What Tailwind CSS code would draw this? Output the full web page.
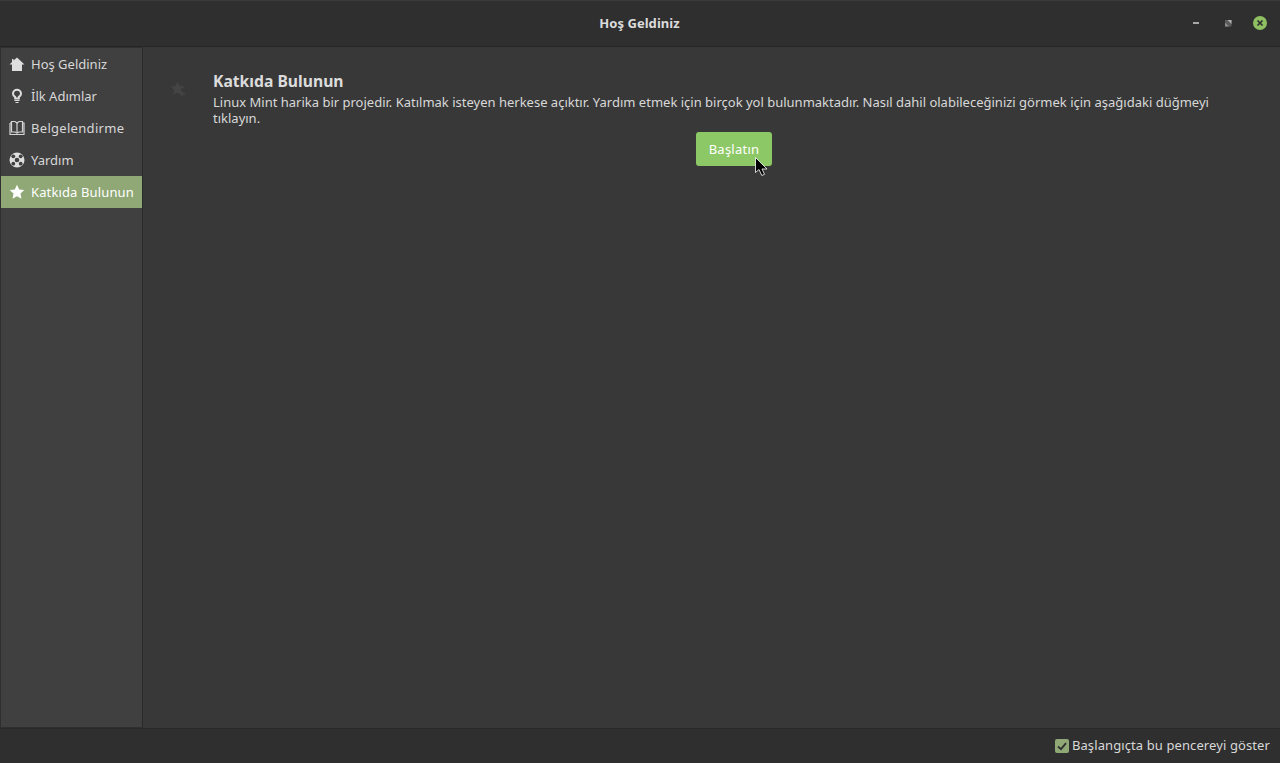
<!DOCTYPE html>
<html lang="tr">
<head>
    <meta charset="utf-8"/>
    <title>Hoş Geldiniz</title>
    <script src="https://cdn.jsdelivr.net/npm/@tailwindcss/browser@4"></script>
</head>
<body class="w-[1280px] h-[763px] overflow-hidden bg-[#383838] text-[13px] text-[#d8d8d8] font-['Noto_Sans',sans-serif]">
<div class="flex flex-col h-[763px]">
    <!-- title bar -->
    <header class="relative flex items-center justify-center h-[46px] shrink-0 bg-[#2f2f2f] border-t border-[#3a3a3a]">
        <h1 class="text-[13px] font-bold text-[#dcdcdc] tracking-[0.05px] pr-[1px]">Hoş Geldiniz</h1>
        <div class="absolute right-[13px] top-[15px] flex items-center gap-[18px]">
            <div class="w-[14px] h-[14px] flex items-center justify-center">
                <div class="w-[6px] h-[2px] bg-[#a8a8a8]"></div>
            </div>
            <svg class="w-[14px] h-[14px]" viewBox="0 0 14 14">
                <rect x="4" y="4" width="6.500" height="6.500" fill="#5c5c5c"/>
                <path d="M6.500 4h4v4z" fill="#b4b4b4"/>
                <path d="M4 6.500l4 4H4z" fill="#8c8c8c"/>
            </svg>
            <svg class="w-[14px] h-[14px]" viewBox="0 0 14 14">
                <circle cx="7" cy="7" r="7" fill="#8fbf63"/>
                <path d="M4.500 4.500l5 5M9.500 4.500l-5 5" stroke="#2f2f2f" stroke-width="1.700"/>
            </svg>
        </div>
    </header>
    <div class="flex flex-1 min-h-0 border-t border-[#262626]">
        <!-- sidebar -->
        <nav class="w-[143px] shrink-0 flex flex-col pl-px pt-px pb-px bg-[#2f2f2f]">
            <div class="flex-1 flex flex-col bg-[#404040] border-r border-[#2a2a2a]">
                <a class="flex items-center h-8 pl-2 gap-[6px]">
                    <svg class="w-4 h-4" viewBox="0 0 16 16" fill="#dedede"><path d="M8 1.500 4.500 4.500V3H3v3L.5 8.500H3V15h10V8.500h2.500z"/></svg>
                    <span class="pt-[2px]">Hoş Geldiniz</span>
                </a>
                <a class="flex items-center h-8 pl-2 gap-[6px]">
                    <svg class="w-4 h-4" viewBox="0 0 16 16" fill="none" stroke="#dedede"><path stroke-width="2" d="M6.200 10.500V9C4.800 8.300 4 7.300 4 5.800a4 4 0 0 1 8 0c0 1.500-.8 2.500-2.200 3.200v1.500z"/><path stroke-width="1.200" d="M5.500 12.500h5M6.500 14.500h3"/></svg>
                    <span class="pt-[2px]">İlk Adımlar</span>
                </a>
                <a class="flex items-center h-8 pl-2 gap-[6px]">
                    <svg class="w-4 h-4" viewBox="0 0 16 16" fill="none" stroke="#d4d4d4" stroke-width="1.200"><path d="M1 3h1.500M13.500 3H15v11.500H1V3"/><path d="M2.500 1.500h3.500L8 3l2-1.500h3.500v10.500H10l-2 1-2-1H2.500z"/><path d="M8 3v9.500"/></svg>
                    <span class="pt-[2px] tracking-[0.3px]">Belgelendirme</span>
                </a>
                <a class="flex items-center h-8 pl-2 gap-[6px]">
                    <svg class="w-4 h-4" viewBox="0 0 16 16"><circle cx="8" cy="8" r="7.500" fill="#dedede"/><circle cx="8" cy="8" r="2.300" fill="#404040"/><g fill="#404040"><circle cx="4.300" cy="4.300" r="1.900"/><circle cx="11.700" cy="4.300" r="1.900"/><circle cx="4.300" cy="11.700" r="1.900"/><circle cx="11.700" cy="11.700" r="1.900"/></g></svg>
                    <span class="pt-[2px]">Yardım</span>
                </a>
                <a class="flex items-center h-8 pl-2 gap-[6px] bg-[#8fa876] text-white">
                    <svg class="w-4 h-4" viewBox="0 0 16 16" fill="#ffffff"><path d="M8 .8l2.200 4.700 5.100.6-3.800 3.500 1 5.100L8 12.200l-4.500 2.500 1-5.100L.7 6.100l5.100-.6z"/></svg>
                    <span class="pt-[2px] tracking-[0.13px]">Katkıda Bulunun</span>
                </a>
            </div>
        </nav>
        <!-- content -->
        <main class="relative flex-1 min-w-0 flex items-start pl-[27px] pt-[25px]">
            <svg class="w-[16px] h-[16px] mt-[9px] shrink-0" viewBox="0 0 16 16" fill="#444444"><path d="M7.500 .5l2 4.500 5 .6-3.700 3.300 1 5L7.500 11.500l-4.300 2.400 1-5L.5 5.600l5-.6z"/><path d="M11.500 10h1.500v2h2v1.500h-2v2h-1.500v-2h-2V12h2z"/></svg>
            <div class="ml-[27px] w-[1042px] shrink-0">
                <h2 class="text-[15.7px] leading-[18px] font-bold text-[#dcdcdc]">Katkıda Bulunun</h2>
                <p class="leading-[16px] mt-[4px]">Linux Mint harika bir projedir. Katılmak isteyen herkese açıktır. Yardım etmek için birçok yol bulunmaktadır. Nasıl dahil olabileceğinizi görmek için aşağıdaki düğmeyi tıklayın.</p>
                <div class="flex justify-center mt-[6px]">
                    <button class="w-[76px] h-[34px] pt-[2px] rounded-[3px] bg-[#8cc865] text-white text-[13px] tracking-[0.25px]">Başlatın</button>
                </div>
            </div>
            <!-- mouse pointer -->
            <svg class="absolute left-[612px] top-[110px] w-[13px] h-[20px]" viewBox="0 0 13 20"><path d="M.5.5V15.500L4 12.500 6.800 18.500 9.500 17.300 7 12H12z" fill="#000000" stroke="#ffffff" stroke-width=".8"/></svg>
        </main>
    </div>
    <!-- bottom bar -->
    <footer class="h-[35px] shrink-0 flex items-center justify-end gap-[3px] pr-[10px] bg-[#2f2f2f] border-t border-[#292929]">
        <svg class="w-[14px] h-[14px]" viewBox="0 0 14 14"><rect width="14" height="14" rx="2" fill="#8fa876"/><path d="M3 7.500l3 2.700 5-6" fill="none" stroke="#2f2f2f" stroke-width="1.800"/></svg>
        <span class="tracking-[0.1px]">Başlangıçta bu pencereyi göster</span>
    </footer>
</div>
</body>
</html>
